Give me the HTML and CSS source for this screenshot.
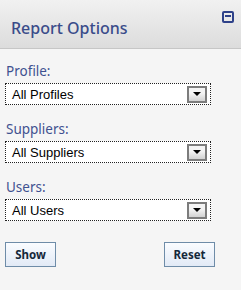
FILE: index.html
```html
<!DOCTYPE html>
<html lang="en">
<head>
  <meta charset="UTF-8">
  <meta name="viewport" content="width=device-width, initial-scale=1.0">
  <title>Report Options</title>
  <link rel="stylesheet" href="styles.css">
</head>
<body>
  <div class="panel">
    <div class="panel-header">
      <h1>Report Options</h1>
      <span class="collapse" title="Collapse"></span>
    </div>
    <div class="panel-body">
      <div class="field">
        <label>Profile:</label>
        <div class="select">
          <span class="select-text">All Profiles</span>
          <span class="select-arrow"></span>
        </div>
      </div>
      <div class="field">
        <label>Suppliers:</label>
        <div class="select">
          <span class="select-text">All Suppliers</span>
          <span class="select-arrow"></span>
        </div>
      </div>
      <div class="field">
        <label>Users:</label>
        <div class="select">
          <span class="select-text">All Users</span>
          <span class="select-arrow"></span>
        </div>
      </div>
      <div class="actions">
        <button class="btn">Show</button>
        <button class="btn">Reset</button>
      </div>
    </div>
  </div>
</body>
</html>
```

FILE: styles.css
```css
body {
  margin: 0;
  padding: 0;
  background-color: #f5f5f5;
  font-family: "Noto Sans", sans-serif;
}
.panel {
  width: 241px;
  height: 290px;
  background: #f5f5f5;
}
.panel-header {
  height: 48px;
  display: flex;
  justify-content: space-between;
  background: linear-gradient(#f1f1f1, #dcdcdc);
  border-bottom: 1px solid #c6c6c6;
}
.panel-header h1 {
  margin: 0;
  padding: 17px 0 0 11px;
  font-size: 16px;
  font-weight: 500;
  line-height: 22px;
  color: #3a4c8a;
}
.collapse {
  box-sizing: border-box;
  width: 12px;
  height: 12px;
  margin: 11px 7px 0 0;
  border: 2px solid #2e4189;
  border-radius: 2px;
  display: flex;
  justify-content: center;
}
.collapse::before {
  content: "";
  width: 6px;
  height: 2px;
  margin-top: 2px;
  background: #2e4189;
}
.panel-body {
  padding: 13px 0 0 5px;
}
.field {
  margin-bottom: 15px;
}
.field label {
  display: block;
  height: 18px;
  margin: 0 0 3px 1px;
  font-size: 13.5px;
  line-height: 18px;
  color: #3f5190;
}
.select {
  box-sizing: border-box;
  width: 206px;
  height: 22px;
  display: flex;
  align-items: center;
  justify-content: space-between;
  background: white;
  border: 1px dotted #222;
}
.select-text {
  padding-left: 6px;
  font-family: "Liberation Sans", Arial, sans-serif;
  font-size: 13px;
  color: #000;
}
.select-arrow {
  box-sizing: border-box;
  width: 20px;
  height: 17px;
  margin-right: 3px;
  border: 2px solid #7c7c7c;
  background: linear-gradient(#f4f4f4 40%, #d2d2d2);
  display: flex;
  justify-content: center;
  padding-top: 4px;
}
.select-arrow::before {
  content: "";
  width: 0;
  height: 0;
  border-left: 4px solid transparent;
  border-right: 4px solid transparent;
  border-top: 4px solid #000;
}
.actions {
  display: flex;
  justify-content: space-between;
  width: 210px;
  margin-top: 21px;
}
.btn {
  width: 51px;
  height: 25px;
  padding: 0;
  font-family: "Noto Sans", sans-serif;
  font-size: 11.5px;
  font-weight: bold;
  color: #15283a;
  border: 1px solid #6e8ca8;
  background: linear-gradient(#fafcff, #e2eaf6);
  cursor: pointer;
}
```
